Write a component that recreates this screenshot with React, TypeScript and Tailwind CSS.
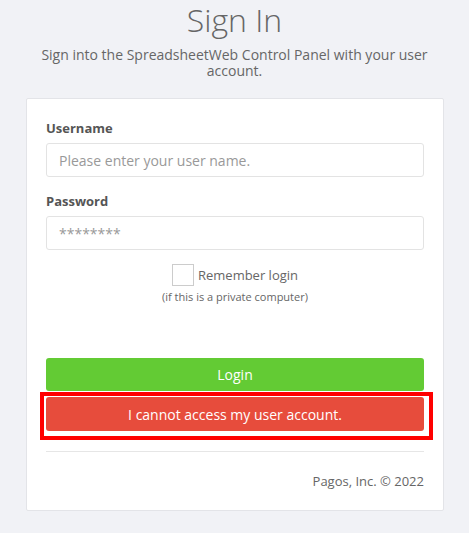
export default function App() {
  return (
    <div
      className="min-h-[533px] bg-[#f1f2f6] text-[#666]"
      style={{ fontFamily: '"Open Sans", "Noto Sans", sans-serif' }}
    >
      <div className="px-[35px] text-center">
        <h1 className="text-[32px] leading-[40px] font-light text-[#666]">Sign In</h1>
        <p className="mt-[7px] text-[14px] leading-[16px] text-[#666]">
          Sign into the SpreadsheetWeb Control Panel with your user account.
        </p>
      </div>

      <div className="ml-[26px] mr-[25px] mt-[19px] rounded-[2px] border border-[#e3e4e8] bg-white px-[19px] pt-[20px] pb-[19px]">
        <Field label="Username" placeholder="Please enter your user name." />
        <div className="mt-[15px]">
          <Field label="Password" placeholder="********" />
        </div>

        <div className="mt-[14px] flex items-center justify-center gap-[4px]">
          <span className="h-[22px] w-[22px] border border-[#ccc] bg-white" />
          <span className="text-[13px] leading-[20px] text-[#666]">Remember login</span>
        </div>
        <div className="mt-[3px] text-center text-[11px] leading-[16px] text-[#666]">
          (if this is a private computer)
        </div>

        <button className="mt-[53px] flex h-[33px] w-full items-center justify-center rounded-[3px] bg-[#63cb34] text-[14px] text-white">
          Login
        </button>
        <div className="relative mt-[6px]">
          <button className="flex h-[34px] w-full items-center justify-center rounded-[3px] bg-[#e74c3c] text-[14px] text-white">
            I cannot access my user account.
          </button>
          <div className="pointer-events-none absolute -left-[6px] -top-[5px] h-[48px] w-[393px] border-[4px] border-[#ff0000]" />
        </div>

        <div className="mt-[20px] h-px bg-[#e6e6e6]" />
        <div className="mt-[19px] text-right text-[13px] leading-[20px] text-[#666]">
          Pagos, Inc. © 2022
        </div>
      </div>
    </div>
  );
}

function Field({ label, placeholder }: { label: string; placeholder: string }) {
  return (
    <div>
      <div className="text-[13px] font-bold leading-[18px] text-[#555]">{label}</div>
      <input
        className="mt-[6px] block h-[34px] w-full rounded-[3px] border border-[#e3e3e3] bg-white px-3 text-[14px] text-[#555] outline-none placeholder:text-[#999]"
        placeholder={placeholder}
      />
    </div>
  );
}
